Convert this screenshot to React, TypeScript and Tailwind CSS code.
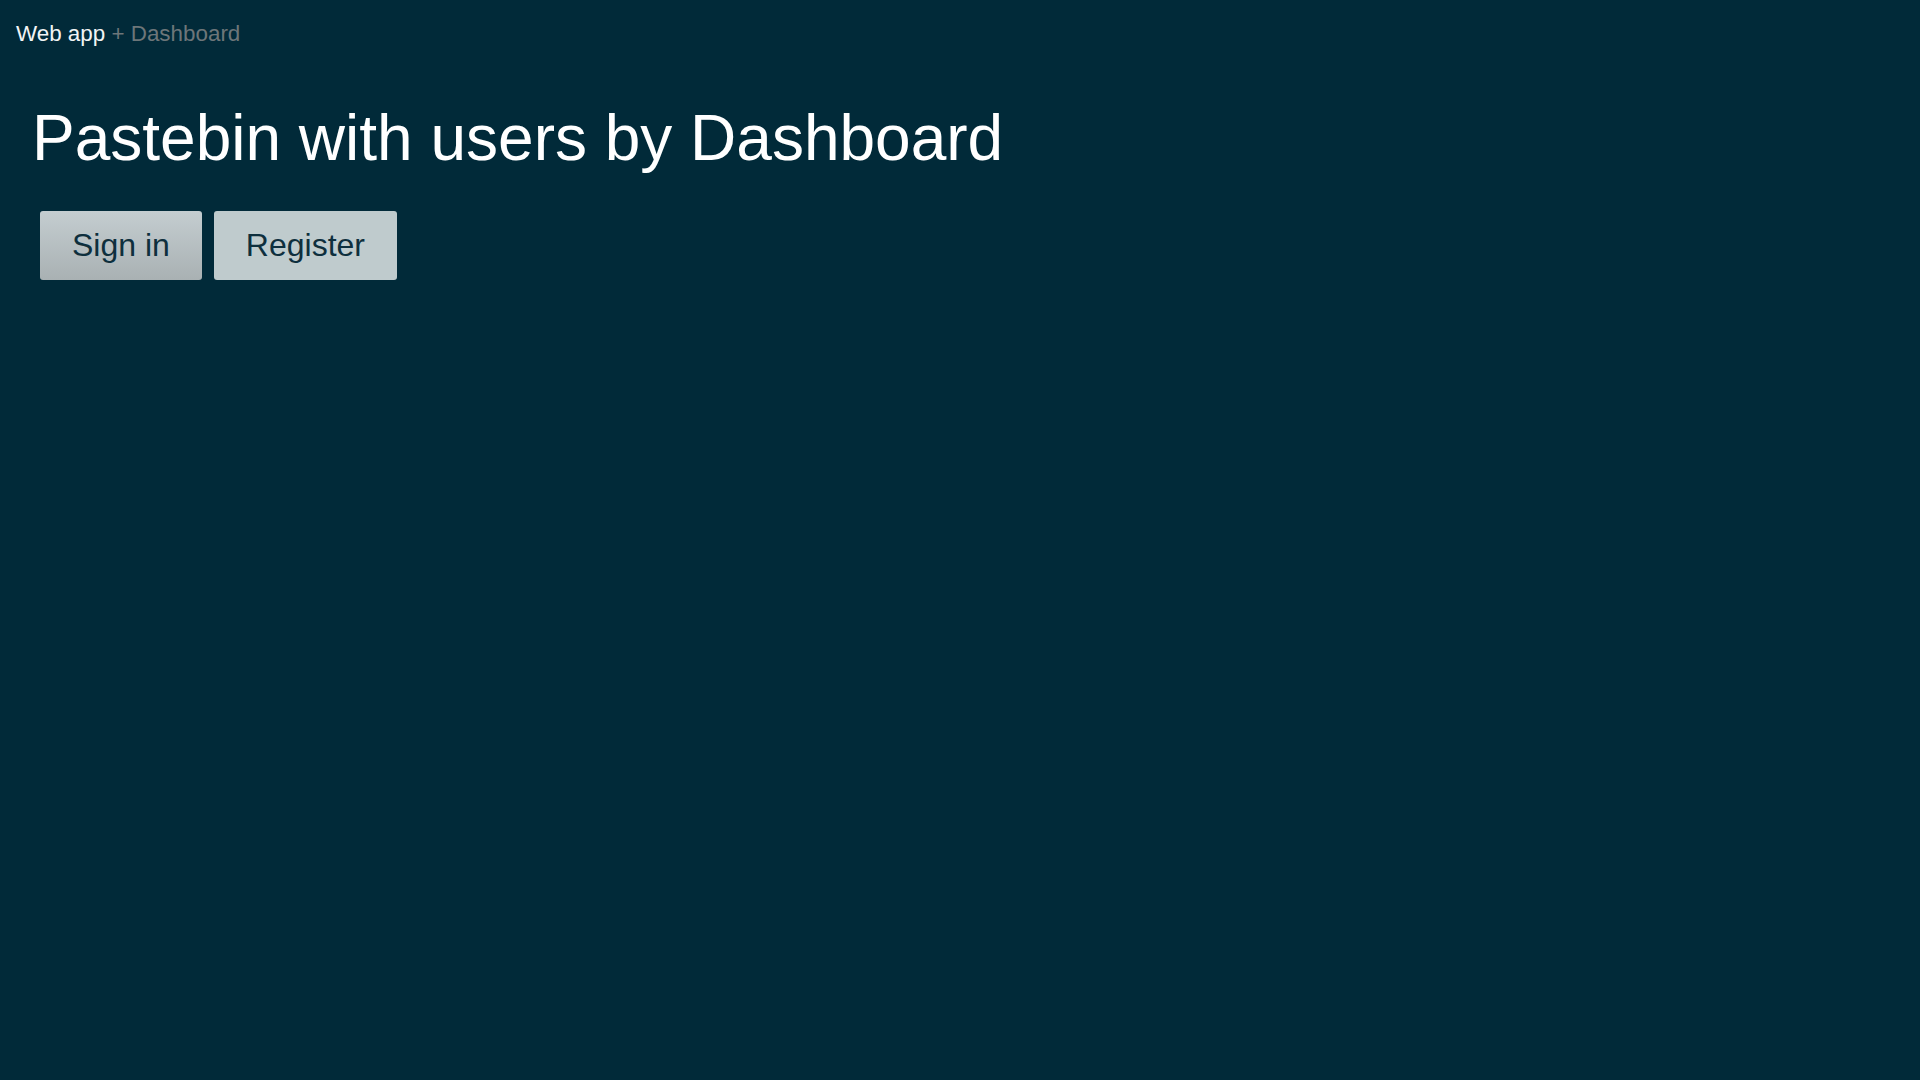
export default function App() {
  return (
    <div className="min-h-screen bg-[#012a39] font-['Liberation_Sans',Arial,sans-serif] text-white">
      <header className="px-4 pt-[21px] text-[22.4px] leading-[normal]">
        <span className="text-[#f2f4f5]">Web app</span>{' '}
        <span className="text-[#6d7679]">+ Dashboard</span>
      </header>

      <main className="pl-8">
        <h1 className="mt-[54px] text-[64px] font-normal leading-[normal]">
          Pastebin with users by Dashboard
        </h1>
        <div className="mt-[36px] flex gap-3 pl-2">
          <button className="rounded-[3px] bg-gradient-to-b from-[#c4cdd0] to-[#a9b1b3] px-8 py-4 text-[32px] leading-[normal] text-[#0e2f3d]">
            Sign in
          </button>
          <button className="rounded-[3px] bg-[#bfcbcd] px-8 py-4 text-[32px] leading-[normal] text-[#0e2f3d]">
            Register
          </button>
        </div>
      </main>
    </div>
  );
}
